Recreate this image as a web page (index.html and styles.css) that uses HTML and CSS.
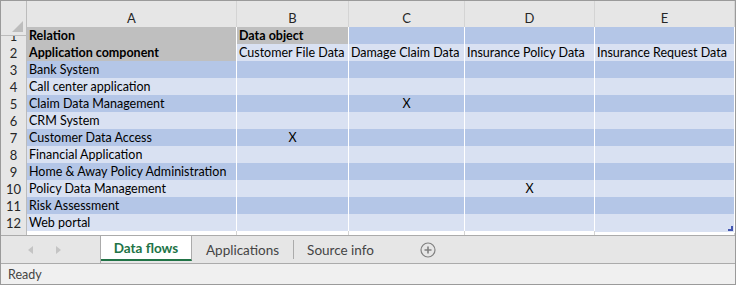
FILE: index.html
```html
<!DOCTYPE html>
<html lang="en">
<head>
    <meta charset="UTF-8">
    <title>Data flows</title>
    <link rel="stylesheet" href="styles.css">
</head>
<body>
<div class="window">
    <div class="sheet">
        <div class="row head">
            <div class="corner"><span class="tri"></span></div>
            <div class="colh">A</div>
            <div class="colh">B</div>
            <div class="colh">C</div>
            <div class="colh">D</div>
            <div class="colh">E</div>
        </div>
        <div class="row">
            <div class="rowh">1</div>
            <div class="cell gray b">Relation</div>
            <div class="cell gray b">Data object</div>
            <div class="cell blue"></div>
            <div class="cell blue"></div>
            <div class="cell blue"></div>
        </div>
        <div class="row">
            <div class="rowh">2</div>
            <div class="cell gray b">Application component</div>
            <div class="cell light">Customer File Data</div>
            <div class="cell light">Damage Claim Data</div>
            <div class="cell light">Insurance Policy Data</div>
            <div class="cell light">Insurance Request Data</div>
        </div>
        <div class="row odd">
            <div class="rowh">3</div>
            <div class="cell">Bank System</div>
            <div class="cell"></div><div class="cell"></div><div class="cell"></div><div class="cell"></div>
        </div>
        <div class="row even">
            <div class="rowh">4</div>
            <div class="cell">Call center application</div>
            <div class="cell"></div><div class="cell"></div><div class="cell"></div><div class="cell"></div>
        </div>
        <div class="row odd">
            <div class="rowh">5</div>
            <div class="cell">Claim Data Management</div>
            <div class="cell"></div><div class="cell x">X</div><div class="cell"></div><div class="cell"></div>
        </div>
        <div class="row even">
            <div class="rowh">6</div>
            <div class="cell">CRM System</div>
            <div class="cell"></div><div class="cell"></div><div class="cell"></div><div class="cell"></div>
        </div>
        <div class="row odd">
            <div class="rowh">7</div>
            <div class="cell">Customer Data Access</div>
            <div class="cell x">X</div><div class="cell"></div><div class="cell"></div><div class="cell"></div>
        </div>
        <div class="row even">
            <div class="rowh">8</div>
            <div class="cell">Financial Application</div>
            <div class="cell"></div><div class="cell"></div><div class="cell"></div><div class="cell"></div>
        </div>
        <div class="row odd">
            <div class="rowh">9</div>
            <div class="cell">Home &amp; Away Policy Administration</div>
            <div class="cell"></div><div class="cell"></div><div class="cell"></div><div class="cell"></div>
        </div>
        <div class="row even">
            <div class="rowh">10</div>
            <div class="cell">Policy Data Management</div>
            <div class="cell"></div><div class="cell"></div><div class="cell x">X</div><div class="cell"></div>
        </div>
        <div class="row odd">
            <div class="rowh">11</div>
            <div class="cell">Risk Assessment</div>
            <div class="cell"></div><div class="cell"></div><div class="cell"></div><div class="cell"></div>
        </div>
        <div class="row even">
            <div class="rowh">12</div>
            <div class="cell">Web portal</div>
            <div class="cell"></div><div class="cell"></div><div class="cell"></div>
            <div class="cell last"><span class="grip"></span></div>
        </div>
        <div class="row blank">
            <div class="rowh"></div>
            <div class="cell"></div><div class="cell"></div><div class="cell"></div><div class="cell"></div><div class="cell"></div>
        </div>
    </div>

    <div class="tabs">
        <div class="nav">
            <span class="arr left"></span>
            <span class="arr right"></span>
        </div>
        <div class="tab active">Data flows</div>
        <div class="tab">Applications</div>
        <div class="tab">Source info</div>
        <div class="add">
            <svg width="16" height="16" viewBox="0 0 16 16">
                <circle cx="8" cy="8" r="7" fill="none" stroke="#808080" stroke-width="1.2"/>
                <path d="M8 4.5v7M4.5 8h7" stroke="#808080" stroke-width="1.6"/>
            </svg>
        </div>
    </div>

    <div class="status">Ready</div>
</div>
</body>
</html>
```

FILE: styles.css
```css
*{ margin: 0; padding: 0; box-sizing: border-box;}
body{ background: #fff; font-family: Lato, "Liberation Sans", sans-serif;}

.window{ width: 736px; height: 285px; border: 1px solid #9a9a9a; display: flex; flex-direction: column; overflow: hidden;}

.sheet{ height: 234px; flex: none; overflow: hidden; background: #fff;}
.row{ display: grid; grid-template-columns: 26px 210px 112px 116px 130px 140px; height: 17px;}
.row.head{ height: 26px;}

.corner, .colh, .rowh{ background: #e6e6e6; color: #262626; font-size: 13px;}
.corner{ border-right: 1px solid #bcbcbc; border-bottom: 1px solid #bcbcbc; position: relative;}
.corner .tri{ position: absolute; right: 3px; bottom: 3px; width: 0; height: 0;
    border-left: 11px solid transparent; border-bottom: 11px solid #bdbdbd;}
.colh{ border-bottom: 1px solid #bcbcbc; border-right: 1px solid #d4d4d4; text-align: center; line-height: 34px;}
.rowh{ border-right: 1px solid #bcbcbc; border-bottom: 1px solid #d4d4d4; text-align: center; line-height: 18px;}

.cell{ border-right: 1px solid #fff; border-bottom: 1px solid #fff; font-size: 12.5px; line-height: 18px;
    padding-left: 2px; white-space: nowrap; overflow: hidden; color: #000;}
.cell.b{ font-weight: bold;}
.gray{ background: #bfbfbf;}
.blue, .odd .cell{ background: #b4c6e7;}
.light, .even .cell{ background: #d9e1f2;}
.cell.x{ text-align: center; padding-left: 0;}
.cell.last{ position: relative; overflow: visible;}
.grip{ position: absolute; right: 1px; bottom: 1px; width: 5px; height: 5px; background:
    linear-gradient(#4356b1, #4356b1) right bottom / 5px 2px no-repeat,
    linear-gradient(#4356b1, #4356b1) right bottom / 2px 5px no-repeat;}
.blank .cell{ background: #fff; border-right-color: #d4d4d4; border-bottom: 0;}
.blank .rowh{ border-bottom: 0;}

.tabs{ height: 29px; flex: none; border-top: 1px solid #ababab; border-bottom: 1px solid #ababab; background: #e6e6e6;
    display: flex; align-items: stretch; font-size: 13.5px;}
.nav{ width: 100px; border-right: 1px solid #ababab; display: flex; align-items: center; gap: 23px; padding-left: 27px;}
.arr{ width: 0; height: 0; border-top: 4px solid transparent; border-bottom: 4px solid transparent;}
.arr.left{ border-right: 5px solid #c4c4c4;}
.arr.right{ border-left: 5px solid #c4c4c4;}
.tab{ color: #444; padding: 0 14px; display: flex; align-items: center; position: relative;}
.tab + .tab::before{ content: ""; position: absolute; left: 0; top: 4px; bottom: 4px; border-left: 1px solid #ababab;}
.tab.active{ background: #fff; color: #217346; font-weight: bold; width: 91px; justify-content: center;
    border-right: 1px solid #ababab; border-bottom: 2px solid #217346; margin-bottom: 2px; padding: 0;}
.tab.active + .tab::before{ display: none;}
.tab:last-of-type{ border-right: 1px solid #ababab; margin: 4px 0; padding: 0 12px 0 13px;}
.add{ display: flex; align-items: center; padding-left: 32px;}

.status{ flex: 1; background: #f0f0f0; color: #444; font-size: 12.5px; padding: 3px 0 0 7px; line-height: 16px;}
```
